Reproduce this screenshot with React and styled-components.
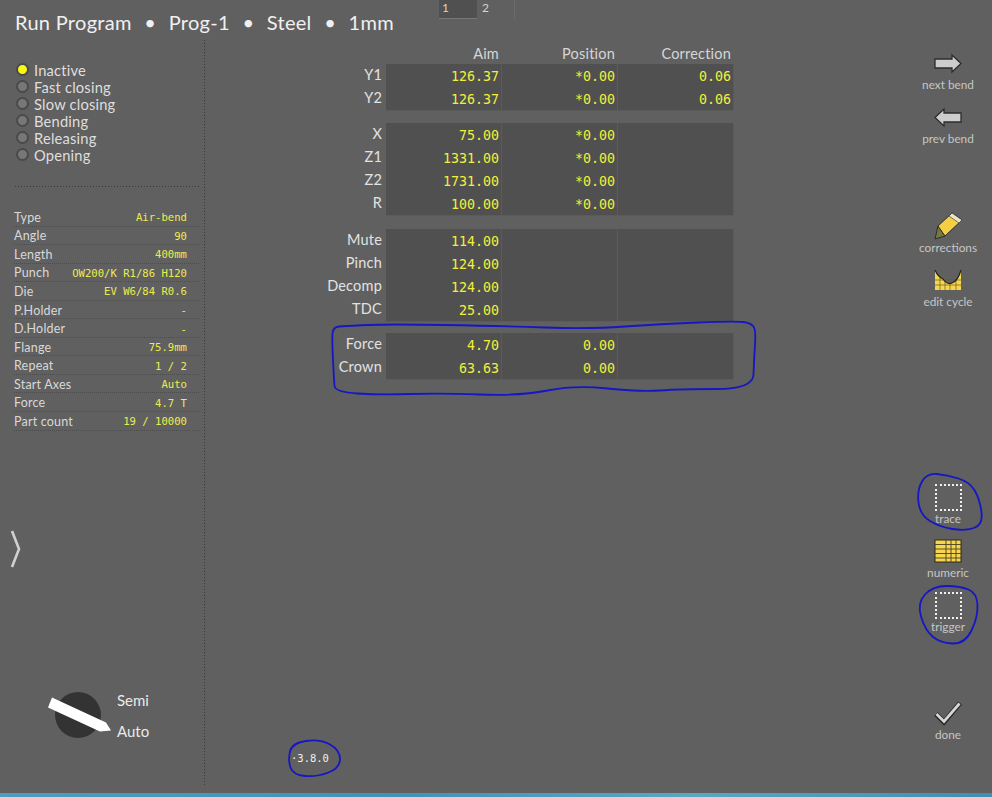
import React from "react";
import styled, { createGlobalStyle } from "styled-components";

const GlobalStyle = createGlobalStyle`
	html, body {
		margin: 0;
		padding: 0;
		background: #606060;
		font-family: "Lato", "Open Sans", sans-serif;
	}
`;

const Page = styled.div`
	position: relative;
	width: 992px;
	height: 797px;
	overflow: hidden;
	display: flex;
	flex-direction: column;
	background: #606060;
`;

const Header = styled.header`
	height: 40px;
	flex: none;
	display: flex;
	align-items: flex-start;
`;

const Title = styled.h1`
	margin: 9px 0 0 15px;
	width: 424px;
	display: flex;
	gap: 12.5px;
	font-size: 20px;
	line-height: 26px;
	font-weight: 400;
	letter-spacing: 0.3px;
	color: #f0f0f0;
	white-space: nowrap;
`;

const Tabs = styled.div`
	display: flex;
	font-size: 12px;
	color: #d4d4d4;
`;

const Tab = styled.div`
	width: 38px;
	height: 19px;
	padding-left: ${(p) => (p.$active ? "3px" : "5px")};
	box-sizing: border-box;
	line-height: 15px;
	background: ${(p) => (p.$active ? "#505050" : "transparent")};
	border-bottom: ${(p) => (p.$active ? "1px solid #777" : "none")};
	margin-right: ${(p) => (p.$active ? "0" : "1px")};
	border-right: ${(p) => (p.$active ? "none" : "1px solid #6c6c6c")};
`;

const Body = styled.div`
	flex: 1;
	display: flex;
	min-height: 0;
`;

const Sidebar = styled.aside`
	width: 205px;
	flex: none;
	height: 747px;
	display: flex;
	flex-direction: column;
	background: repeating-linear-gradient(to bottom, #3a3a3a 0 1px, transparent 1px 3px) right top / 1px 100% no-repeat;
`;

const StatusList = styled.ul`
	list-style: none;
	margin: 21px 0 0 16px;
	padding: 0;
`;

const StatusRow = styled.li`
	height: 17px;
	display: flex;
	align-items: center;
	gap: 5px;
	font-size: 14.7px;
	letter-spacing: 0.2px;
	color: #dedede;
`;

const Lamp = styled.span`
	width: 9px;
	height: 9px;
	border-radius: 50%;
	border: 2px solid #4a4a4a;
	background: ${(p) => (p.$on ? "#fafa10" : "#777")};
`;

const DottedRule = styled.div`
	height: 1px;
	margin: 23px 6px 21px 15px;
	background: repeating-linear-gradient(to right, #3a3a3a 0 1px, transparent 1px 3px);
`;

const InfoList = styled.div`
	margin: 0 6px 0 14px;
`;

const InfoRow = styled.div`
	height: 18.55px;
	display: flex;
	justify-content: space-between;
	align-items: center;
	padding-right: 12px;
	box-sizing: border-box;
	background: repeating-linear-gradient(to right, #4c4c4c 0 1px, transparent 1px 2px) left bottom / 100% 1px no-repeat;
`;

const InfoLabel = styled.span`
	font-size: 12.5px;
	letter-spacing: 0.2px;
	color: #d8d8d8;
`;

const InfoValue = styled.span`
	font-family: "DejaVu Sans Mono", monospace;
	font-size: 10.6px;
	color: #ecec50;
	white-space: pre;
`;

const Chevron = styled.svg`
	display: block;
	width: 14px;
	height: 42px;
	margin: 97px 0 0 8px;
`;

const ModeSwitch = styled.div`
	margin-top: auto;
	margin-bottom: 40px;
	margin-left: 46px;
	display: flex;
`;

const ModeLabels = styled.div`
	margin-left: 1px;
	font-size: 15px;
	line-height: 31px;
	color: #eaeaea;
`;

const Main = styled.main`
	flex: 1;
	height: 747px;
	padding-left: 95px;
	box-sizing: border-box;
	display: flex;
	flex-direction: column;
`;

const Columns = styled.div`
	display: grid;
	grid-template-columns: 86px repeat(3, 116px);
	margin-top: 5px;
	height: 19px;
	font-size: 14.5px;
	line-height: 17px;
	letter-spacing: 0.2px;
	color: #d6d6d6;
	text-align: right;
	& > span {
		padding-right: 3px;
	}
`;

const Group = styled.div`
	margin-bottom: ${(p) => p.$after || 13}px;
`;

const Row = styled.div`
	display: grid;
	grid-template-columns: 86px repeat(3, 116px);
	height: 23px;
`;

const RowLabel = styled.div`
	padding-right: 4px;
	font-size: 14.5px;
	line-height: 21px;
	letter-spacing: 0.2px;
	text-align: right;
	color: #e2e2e2;
`;

const Cell = styled.div`
	background: #505050;
	border-right: 1px solid #5b5b5b;
	border-bottom: 1px solid #5b5b5b;
	padding: 2px 2px 0 0;
	font-family: "DejaVu Sans Mono", monospace;
	font-size: 13.3px;
	line-height: 21px;
	text-align: right;
	color: #f0f03c;
`;

const Version = styled.div`
	margin-top: auto;
	margin-bottom: 22px;
	margin-left: -9px;
	font-family: "DejaVu Sans Mono", monospace;
	font-size: 10.5px;
	line-height: 14px;
	color: #f0f0f0;
`;

const Toolbar = styled.nav`
	width: 88px;
	flex: none;
	padding-top: 8px;
	display: flex;
	flex-direction: column;
	align-items: center;
`;

const ToolButton = styled.div`
	width: 88px;
	height: 54px;
	flex: none;
	margin-top: ${(p) => p.$top || 0}px;
	display: flex;
	flex-direction: column;
	align-items: center;
	font-size: 11.8px;
	line-height: 14px;
	color: #c6c6c6;
`;

const IconBox = styled.svg`
	display: block;
	width: 30px;
	height: 30px;
	flex: none;
`;

const SquareSlot = styled.div`
	width: 30px;
	height: 30px;
	flex: none;
	display: flex;
	align-items: center;
	justify-content: center;
`;

const DottedSquare = styled.span`
	width: 23px;
	height: 23px;
	border: 2px dotted #f0f0f0;
`;

const BottomStrip = styled.div`
	position: absolute;
	left: 0;
	right: 0;
	bottom: 0;
	height: 4px;
	background: linear-gradient(to right, #4b9fbc, #3f93b6 40%, #59a8c2 70%, #3e8fb0);
`;

const Annotations = styled.svg`
	position: absolute;
	left: 0;
	top: 0;
	width: 992px;
	height: 797px;
	pointer-events: none;
`;

const statuses = ["Inactive", "Fast closing", "Slow closing", "Bending", "Releasing", "Opening"];

const info = [
	["Type", "Air-bend"],
	["Angle", "90"],
	["Length", "400mm"],
	["Punch", "OW200/K R1/86 H120"],
	["Die", "EV W6/84 R0.6"],
	["P.Holder", "-"],
	["D.Holder", "-"],
	["Flange", "75.9mm"],
	["Repeat", "1 / 2"],
	["Start Axes", "Auto"],
	["Force", "4.7 T"],
	["Part count", "19 / 10000"],
];

const groups = [
	{
		after: 13,
		rows: [
			["Y1", "126.37", "*0.00", "0.06"],
			["Y2", "126.37", "*0.00", "0.06"],
		],
	},
	{
		after: 14,
		rows: [
			["X", "75.00", "*0.00", ""],
			["Z1", "1331.00", "*0.00", ""],
			["Z2", "1731.00", "*0.00", ""],
			["R", "100.00", "*0.00", ""],
		],
	},
	{
		after: 12,
		rows: [
			["Mute", "114.00", "", ""],
			["Pinch", "124.00", "", ""],
			["Decomp", "124.00", "", ""],
			["TDC", "25.00", "", ""],
		],
	},
	{
		after: 0,
		rows: [
			["Force", "4.70", "0.00", ""],
			["Crown", "63.63", "0.00", ""],
		],
	},
];

// hand drawn marker rings, points read off the picture
const rings = [
	[[333, 327], [345, 326], [390, 324], [500, 326], [590, 329], [660, 324], [735, 321], [751, 323], [756, 330], [754, 360], [753, 389], [680, 389], [640, 392], [575, 385], [520, 396], [440, 393], [380, 395], [335, 392], [334, 380], [332, 340]],
	[[970, 482], [947, 475], [927, 473], [917, 490], [920, 515], [940, 527], [965, 531], [983, 525], [980, 500]],
	[[933, 586], [917, 603], [925, 630], [940, 643], [965, 644], [978, 617], [977, 593], [960, 586]],
	[[292, 743], [320, 739], [340, 750], [340, 768], [317, 777], [293, 775], [288, 760]],
];

const ringPath = (pts) => {
	const mid = (a, b) => [(a[0] + b[0]) / 2, (a[1] + b[1]) / 2];
	const start = mid(pts[pts.length - 1], pts[0]);
	let d = `M${start[0]} ${start[1]}`;
	pts.forEach((p, i) => {
		const m = mid(p, pts[(i + 1) % pts.length]);
		d += ` Q${p[0]} ${p[1]} ${m[0]} ${m[1]}`;
	});
	return d + "Z";
};

const ArrowIcon = ({ flip }) => (
	<IconBox viewBox="0 0 30 30">
		<polygon
			points={flip ? "28,11 11,11 11,7 2,15.500 11,24 11,20 28,20" : "2,11 19,11 19,7 28,15.500 19,24 19,20 2,20"}
			fill="#cdcdcd"
			stroke="#2c2c2c"
			strokeWidth="1.300"
		/>
	</IconBox>
);

const PencilIcon = () => (
	<IconBox viewBox="0 0 30 30">
		<polygon points="5,15 12,25 2,28" fill="#77793a" stroke="#2c2c2c" strokeWidth="1" />
		<polygon points="5,15 19,2 29,9 12,25" fill="#f4cf45" stroke="#2c2c2c" strokeWidth="1" />
		<polygon points="19,2 29,9 26,12 16,5" fill="#e9e4c8" stroke="#2c2c2c" strokeWidth="0.600" />
	</IconBox>
);

const CycleIcon = () => (
	<IconBox viewBox="0 0 30 30">
		<path d="M2 5 Q5 12 10 14 Q14 20 19 18 Q25 16 28 5 V25 H2Z" fill="#f6d64e" />
		<g stroke="#6b5b1e" strokeWidth="0.700">
			<path d="M2 15H28M2 20H28M7 10V25M12 15V25M17 18V25M23 13V25" />
		</g>
		<path d="M2 5 Q5 12 10 14 Q14 20 19 18 Q25 16 28 5" fill="none" stroke="#222" strokeWidth="1.200" />
	</IconBox>
);

const GridIcon = () => (
	<IconBox viewBox="0 0 30 30">
		<rect x="2" y="4" width="26" height="22" fill="#f6d64e" stroke="#2e2a14" strokeWidth="1" />
		<path d="M2 8.500H28M2 13H28M2 17.500H28M2 22H28M13 4V26M18 4V26M23 4V26" stroke="#4a4120" strokeWidth="0.900" fill="none" />
	</IconBox>
);

const CheckIcon = () => (
	<IconBox viewBox="0 0 30 30">
		<polyline points="3,16 11,24 27,5" fill="none" stroke="#262626" strokeWidth="5" />
		<polyline points="3.500,16 11,23.500 26.500,5.500" fill="none" stroke="#d6d6d6" strokeWidth="2.800" />
	</IconBox>
);

const App = () => (
	<Page>
		<GlobalStyle />
		<Header>
			<Title>
				<span>Run Program</span>
				<span>•</span>
				<span>Prog-1</span>
				<span>•</span>
				<span>Steel</span>
				<span>•</span>
				<span>1mm</span>
			</Title>
			<Tabs>
				<Tab $active>1</Tab>
				<Tab>2</Tab>
			</Tabs>
		</Header>
		<Body>
			<Sidebar>
				<StatusList>
					{statuses.map((s, i) => (
						<StatusRow key={s}>
							<Lamp $on={i === 0} />
							{s}
						</StatusRow>
					))}
				</StatusList>
				<DottedRule />
				<InfoList>
					{info.map(([label, value]) => (
						<InfoRow key={label}>
							<InfoLabel>{label}</InfoLabel>
							<InfoValue>{value}</InfoValue>
						</InfoRow>
					))}
				</InfoList>
				<Chevron viewBox="0 0 14 42">
					<polyline points="4,3 11,21 4,39" fill="none" stroke="#d0d0d0" strokeWidth="2.600" />
				</Chevron>
				<ModeSwitch>
					<svg width="70" height="62" viewBox="0 0 70 62">
						<circle cx="32" cy="30" r="23" fill="#333" />
						<polygon points="6,12.500 2,22.500 54,46.500 65,45.500 60,37.500" fill="#fff" />
					</svg>
					<ModeLabels>
						<div>Semi</div>
						<div>Auto</div>
					</ModeLabels>
				</ModeSwitch>
			</Sidebar>
			<Main>
				<Columns>
					<span />
					<span>Aim</span>
					<span>Position</span>
					<span>Correction</span>
				</Columns>
				{groups.map((g) => (
					<Group key={g.rows[0][0]} $after={g.after}>
						{g.rows.map(([label, aim, pos, corr]) => (
							<Row key={label}>
								<RowLabel>{label}</RowLabel>
								<Cell>{aim}</Cell>
								<Cell>{pos}</Cell>
								<Cell>{corr}</Cell>
							</Row>
						))}
					</Group>
				))}
				<Version>·3.8.0</Version>
			</Main>
			<Toolbar>
				<ToolButton>
					<ArrowIcon />
					next bend
				</ToolButton>
				<ToolButton>
					<ArrowIcon flip />
					prev bend
				</ToolButton>
				<ToolButton $top={55}>
					<PencilIcon />
					corrections
				</ToolButton>
				<ToolButton>
					<CycleIcon />
					edit cycle
				</ToolButton>
				<ToolButton $top={163}>
					<SquareSlot>
						<DottedSquare />
					</SquareSlot>
					trace
				</ToolButton>
				<ToolButton>
					<GridIcon />
					numeric
				</ToolButton>
				<ToolButton>
					<SquareSlot>
						<DottedSquare />
					</SquareSlot>
					trigger
				</ToolButton>
				<ToolButton $top={54}>
					<CheckIcon />
					done
				</ToolButton>
			</Toolbar>
		</Body>
		<BottomStrip />
		<Annotations viewBox="0 0 992 797">
			{rings.map((pts) => (
				<path key={pts[0].join()} d={ringPath(pts)} fill="none" stroke="#1616c4" strokeWidth="1.800" />
			))}
		</Annotations>
	</Page>
);

export default App;
